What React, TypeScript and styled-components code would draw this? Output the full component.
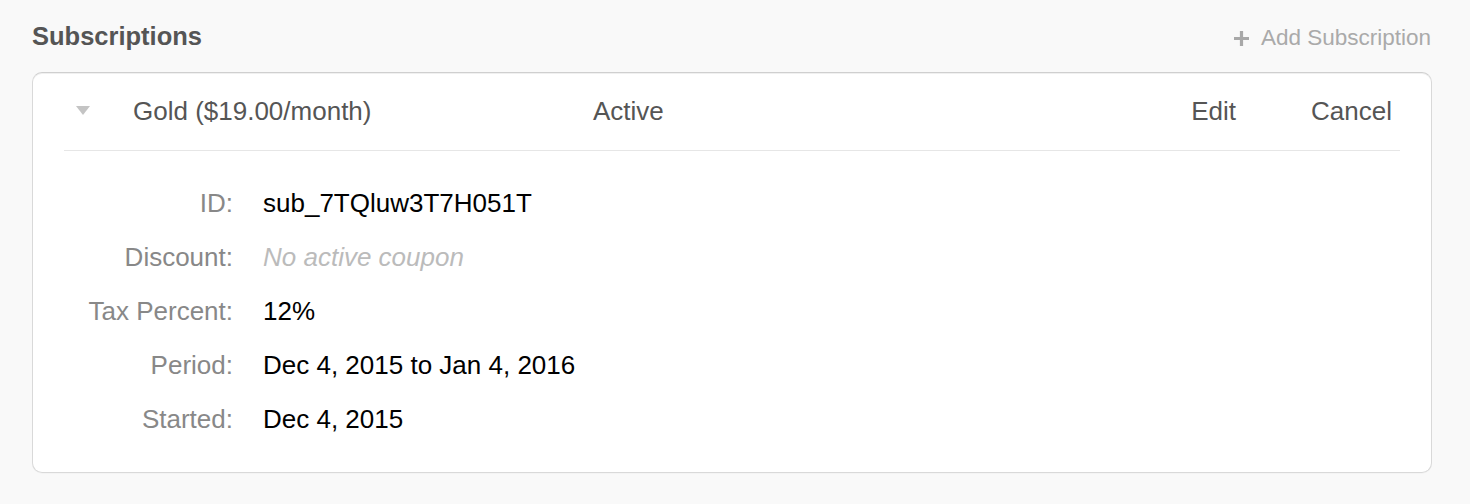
import React from "react";
import styled, { createGlobalStyle } from "styled-components";

const GlobalStyle = createGlobalStyle`
  html, body {
    margin: 0;
    padding: 0;
    background: #f9f9f9;
    font-family: "Liberation Sans", Arial, Helvetica, sans-serif;
  }
`;

const Page = styled.div`
  padding: 21px 38px 31px 32px;
`;

const TitleBar = styled.div`
  display: flex;
  align-items: center;
  justify-content: space-between;
  height: 30px;
  margin-bottom: 21px;
`;

const Title = styled.h2`
  margin: 0;
  font-size: 25.5px;
  line-height: 30px;
  font-weight: bold;
  color: #555;
`;

const AddLink = styled.a`
  display: flex;
  align-items: center;
  gap: 11px;
  font-size: 22.5px;
  line-height: 30px;
  color: #aaa;
  text-decoration: none;
  margin-top: 4px;
  margin-right: 1px;
`;

const Card = styled.div`
  background: #fff;
  border: 1px solid #d9d9d9;
  border-top-color: #cfcfcf;
  border-radius: 10px;
  box-shadow: inset 0 1px 0 rgba(0, 0, 0, 0.06), 0 1px 0 rgba(0, 0, 0, 0.02);
  padding: 0 31px 26px 31px;
`;

const HeaderRow = styled.div`
  display: grid;
  grid-template-columns: 69px 460px 1fr auto auto;
  align-items: center;
  height: 77px;
  border-bottom: 1px solid #e6e6e6;
  font-size: 26px;
  color: #555;
  padding-right: 8px;
`;

const Caret = styled.span`
  display: block;
  width: 0;
  height: 0;
  margin-left: 12px;
  margin-top: -2px;
  border-left: 7px solid transparent;
  border-right: 7px solid transparent;
  border-top: 9px solid #c4c4c4;
`;

const HeaderText = styled.span`
  line-height: 30px;
  margin-top: -2px;
`;

const Action = styled.a<{ $gap?: number }>`
  line-height: 30px;
  margin-top: -2px;
  color: #555;
  text-decoration: none;
  margin-left: ${(p) => p.$gap ?? 0}px;
`;

const Details = styled.dl`
  margin: 25px 0 0 0;
  display: grid;
  grid-template-columns: 169px 1fr;
  grid-auto-rows: 54px;
  column-gap: 30px;
  font-size: 26px;
`;

const Label = styled.dt`
  display: flex;
  align-items: center;
  justify-content: flex-end;
  color: #888;
  margin: 0;
`;

const Value = styled.dd<{ $muted?: boolean }>`
  display: flex;
  align-items: center;
  margin: 0;
  color: ${(p) => (p.$muted ? "#bbb" : "#000")};
  font-style: ${(p) => (p.$muted ? "italic" : "normal")};
`;

const PlusIcon = () => (
  <svg width="17" height="17" viewBox="0 0 17 17" aria-hidden="true">
    <path d="M8.5 1v15M1 8.5h15" stroke="#a8a8a8" strokeWidth="3.2" />
  </svg>
);

const rows: { label: string; value: string; muted?: boolean }[] = [
  { label: "ID:", value: "sub_7TQluw3T7H051T" },
  { label: "Discount:", value: "No active coupon", muted: true },
  { label: "Tax Percent:", value: "12%" },
  { label: "Period:", value: "Dec 4, 2015 to Jan 4, 2016" },
  { label: "Started:", value: "Dec 4, 2015" },
];

export default function App() {
  return (
    <>
      <GlobalStyle />
      <Page>
        <TitleBar>
          <Title>Subscriptions</Title>
          <AddLink href="#">
            <PlusIcon />
            Add Subscription
          </AddLink>
        </TitleBar>
        <Card>
          <HeaderRow>
            <Caret />
            <HeaderText>Gold ($19.00/month)</HeaderText>
            <HeaderText>Active</HeaderText>
            <Action href="#">Edit</Action>
            <Action href="#" $gap={75}>
              Cancel
            </Action>
          </HeaderRow>
          <Details>
            {rows.map((r) => (
              <React.Fragment key={r.label}>
                <Label>{r.label}</Label>
                <Value $muted={r.muted}>{r.value}</Value>
              </React.Fragment>
            ))}
          </Details>
        </Card>
      </Page>
    </>
  );
}
